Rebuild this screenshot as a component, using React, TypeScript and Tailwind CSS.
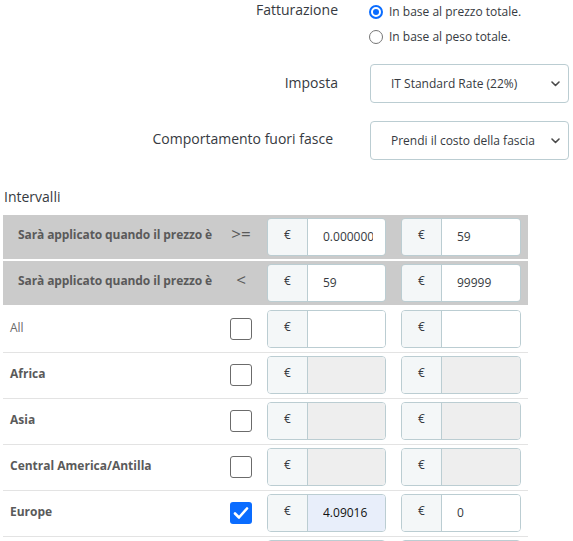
import React from "react";

const font = { fontFamily: "'Open Sans', 'Noto Sans', sans-serif" };

function Radio({ checked }: { checked?: boolean }) {
  return checked ? (
    <span className="flex h-[14px] w-[14px] items-center justify-center rounded-full border-2 border-[#0a6cff] bg-white">
      <span className="h-[6px] w-[6px] rounded-full bg-[#0a6cff]" />
    </span>
  ) : (
    <span className="h-[14px] w-[14px] rounded-full border border-[#767676] bg-white" />
  );
}

function Chevron() {
  return (
    <svg width="9" height="6" viewBox="0 0 9 6" fill="none">
      <path d="M1 1l3.5 3.5L8 1" stroke="#4a4a4a" strokeWidth="1.6" strokeLinecap="round" strokeLinejoin="round" />
    </svg>
  );
}

function SelectBox({ text }: { text: string }) {
  return (
    <div className="flex h-[39px] w-[199px] items-center justify-between rounded-[4px] border border-[#bbcdd2] bg-white pl-[20px] pr-[8px] text-[12px] text-[#363a41]">
      <span>{text}</span>
      <Chevron />
    </div>
  );
}

function Checkbox({ checked }: { checked?: boolean }) {
  return checked ? (
    <span className="flex h-[22px] w-[22px] items-center justify-center rounded-[3px] bg-[#0a6cff]">
      <svg width="16" height="14" viewBox="0 0 16 14" fill="none">
        <path d="M2 7.5l4 4L14 2.5" stroke="white" strokeWidth="2.6" strokeLinecap="round" strokeLinejoin="round" />
      </svg>
    </span>
  ) : (
    <span className="h-[22px] w-[22px] rounded-[3px] border border-[#6b6b6b] bg-white" />
  );
}

type Fill = "white" | "disabled" | "filled";

function MoneyInput({ value, fill = "white", wide }: { value?: string; fill?: Fill; wide?: boolean }) {
  const bg = fill === "disabled" ? "bg-[#eeeeee]" : fill === "filled" ? "bg-[#e8eefa]" : "bg-white";
  return (
    <div className={`flex h-[38px] ${wide ? "w-[120px]" : "w-[119px]"} overflow-hidden rounded-[4px] border border-[#bbcdd2]`}>
      <div className="flex w-[40px] shrink-0 items-center justify-center border-r border-[#bbcdd2] bg-[#f4f7f8] pb-[5px] text-[12px] text-[#363a41]">
        €
      </div>
      <input
        readOnly
        value={value ?? ""}
        className={`min-w-0 flex-1 ${bg} pl-[15px] pr-[12px] text-[12px] ${fill === "filled" ? "text-[#111]" : "text-[#363a41]"} outline-none`}
        style={font}
      />
    </div>
  );
}

const zones: { name: string; bold: boolean; checked?: boolean; a?: string; b?: string; fillA: Fill; fillB: Fill }[] = [
  { name: "All", bold: false, fillA: "white", fillB: "white" },
  { name: "Africa", bold: true, fillA: "disabled", fillB: "disabled" },
  { name: "Asia", bold: true, fillA: "disabled", fillB: "disabled" },
  { name: "Central America/Antilla", bold: true, fillA: "disabled", fillB: "disabled" },
  { name: "Europe", bold: true, checked: true, a: "4.09016", b: "0", fillA: "filled", fillB: "white" },
  { name: "", bold: true, fillA: "disabled", fillB: "disabled" },
];

export default function App() {
  return (
    <div className="h-[541px] w-[573px] overflow-hidden bg-white text-[#363a41]" style={font}>
      {/* Fatturazione */}
      <div className="flex">
        <div className="w-[338px] text-right text-[14px] leading-[20px]">Fatturazione</div>
        <div className="ml-[31px] flex flex-col text-[12px]">
          <label className="flex h-[24px] items-center gap-[6px]">
            <Radio checked />
            <span>In base al prezzo totale.</span>
          </label>
          <label className="flex h-[26px] items-center gap-[6px]">
            <Radio />
            <span>In base al peso totale.</span>
          </label>
        </div>
      </div>

      {/* Imposta */}
      <div className="mt-[14px] flex items-center">
        <div className="w-[338px] pb-[2px] text-right text-[14px]">Imposta</div>
        <div className="ml-[32px]">
          <SelectBox text="IT Standard Rate (22%)" />
        </div>
      </div>

      {/* Comportamento fuori fasce */}
      <div className="mt-[18px] flex items-center">
        <div className="w-[338px] pb-[4px] pr-[5px] text-right text-[14px]">Comportamento fuori fasce</div>
        <div className="ml-[32px]">
          <SelectBox text="Prendi il costo della fascia" />
        </div>
      </div>

      <div className="ml-[4px] mt-[27px] text-[14px] leading-[20px]">Intervalli</div>

      <div className="ml-[3px] mt-[8px] w-[525px]">
        {[
          { op: ">=", a: "0.0000000", b: "59" },
          { op: "<", a: "59", b: "99999" },
        ].map((r, i) => (
          <div key={i} className={`flex h-[44px] items-center bg-[#cbcbcb] ${i === 1 ? "mt-[2px]" : ""}`}>
            <div className="w-[212px] whitespace-nowrap pb-[4px] pl-[15px] text-[12px] font-bold tracking-[-0.1px] text-[#5a5a5a]">
              Sarà applicato quando il prezzo è
            </div>
            <div className="flex w-[52px] justify-center pb-[6px] text-[17px] text-[#5a5a5a]">{r.op}</div>
            <MoneyInput value={r.a} />
            <div className="w-[15px]" />
            <MoneyInput value={r.b} wide />
          </div>
        ))}
        <div className="pt-[2px]">
          {zones.map((z, i) => (
            <div key={i} className="flex h-[46px] items-center border-b border-[#e3e3e3] pb-[1px]">
              <div className={`w-[212px] pb-[3px] pl-[7px] text-[12px] ${z.bold ? "font-bold text-[#5a5a5a]" : "text-[#6a6a6a]"}`}>{z.name}</div>
              <div className="flex w-[52px] justify-center">
                {z.name && <Checkbox checked={z.checked} />}
              </div>
              <MoneyInput value={z.a} fill={z.fillA} />
              <div className="w-[15px]" />
              <MoneyInput value={z.b} fill={z.fillB} wide />
            </div>
          ))}
        </div>
      </div>
    </div>
  );
}
